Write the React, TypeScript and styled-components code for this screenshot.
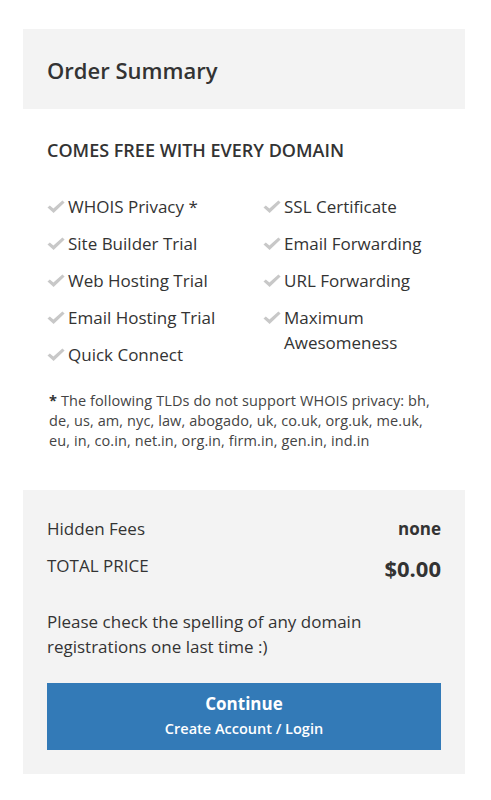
import React from "react";
import styled, { createGlobalStyle } from "styled-components";

const GlobalStyle = createGlobalStyle`
    body {
        margin: 0;
        background: #ffffff;
        font-family: "Open Sans", "Liberation Sans", sans-serif;
        color: #333333;
    }
`

const leftItems = ["WHOIS Privacy *", "Site Builder Trial", "Web Hosting Trial", "Email Hosting Trial", "Quick Connect"];
const rightItems = ["SSL Certificate", "Email Forwarding", "URL Forwarding", "Maximum Awesomeness"];

const Check = () => (
    <CheckIcon viewBox="0 0 18 14" width="18" height="14">
        <path d="M0.5 7.6 L2.8 5.4 L6.4 8.6 L15.4 0.6 L17.6 2.6 L6.6 13 Z" />
    </CheckIcon>
)

const Item = ({ text }: { text: string }) => (
    <Feature>
        <Check />
        <span>{text}</span>
    </Feature>
)

export default function App() {
    return (
        <>
            <GlobalStyle />
            <Panel>
                <Header>
                    <Title>Order Summary</Title>
                </Header>
                <Body>
                    <Heading>COMES FREE WITH EVERY DOMAIN</Heading>
                    <Features>
                        <Column>
                            {leftItems.map((t) => <Item key={t} text={t} />)}
                        </Column>
                        <Column>
                            {rightItems.map((t) => <Item key={t} text={t} />)}
                        </Column>
                    </Features>
                    <Note>
                        <b>*</b> The following TLDs do not support WHOIS privacy: bh, de, us, am, nyc, law, abogado, uk, co.uk, org.uk, me.uk, eu, in, co.in, net.in, org.in, firm.in, gen.in, ind.in
                    </Note>
                </Body>
                <Footer>
                    <Row>
                        <span>Hidden Fees</span>
                        <Value>none</Value>
                    </Row>
                    <Row>
                        <span>TOTAL PRICE</span>
                        <Value $big>$0.00</Value>
                    </Row>
                    <Message>Please check the spelling of any domain registrations one last time :)</Message>
                    <Button type="button">
                        <strong>Continue</strong>
                        <small>Create Account / Login</small>
                    </Button>
                </Footer>
            </Panel>
        </>
    )
}

const Panel = styled.div`
    width: 442px;
    margin: 29px 0 0 23px;
`

const Header = styled.div`
    background: #f3f3f3;
    height: 80px;
    padding: 0 24px;
    display: flex;
    align-items: center;
`

const Title = styled.h2`
    margin: 0;
    font-size: 22px;
    font-weight: 600;
    line-height: 30px;
    padding-top: 2px;
`

const Body = styled.div`
    padding: 29px 24px 39px;
`

const Heading = styled.h3`
    margin: 0 0 32px;
    font-size: 18px;
    font-weight: 600;
    line-height: 24px;
`

const Features = styled.div`
    display: grid;
    grid-template-columns: 216px 1fr;
`

const Column = styled.div`
    display: flex;
    flex-direction: column;
    gap: 12px;
`

const Feature = styled.div`
    display: flex;
    align-items: flex-start;
    gap: 3px;
    font-size: 17px;
    line-height: 25px;
`

const CheckIcon = styled.svg`
    flex: none;
    margin-top: 6px;
    fill: #c8c8c8;
`

const Note = styled.p`
    margin: 24px 0 0 2px;
    font-size: 14.5px;
    letter-spacing: 0.1px;
    line-height: 20px;
    color: #444444;

    b {
        font-weight: 700;
        color: #333333;
    }
`

const Footer = styled.div`
    background: #f3f3f3;
    padding: 26px 24px 24px;
`

const Row = styled.div`
    display: flex;
    justify-content: space-between;
    align-items: flex-start;
    font-size: 17px;
    line-height: 25px;
    margin-bottom: 12px;
`

const Value = styled.span<{ $big?: boolean }>`
    font-weight: 700;
    font-size: ${({ $big }) => ($big ? "22px" : "17px")};
    line-height: ${({ $big }) => ($big ? "30px" : "25px")};
`

const Message = styled.p`
    margin: 26px 0 24px;
    font-size: 17px;
    line-height: 25px;
`

const Button = styled.button`
    display: flex;
    flex-direction: column;
    align-items: center;
    width: 100%;
    height: 67px;
    padding: 9px 0 0;
    border: none;
    border-radius: 0;
    background: #337ab7;
    color: #ffffff;
    font-family: "Open Sans", "Liberation Sans", sans-serif;
    cursor: pointer;

    strong {
        font-size: 17px;
        font-weight: 700;
        line-height: 24px;
    }

    small {
        font-size: 14.5px;
        font-weight: 600;
        line-height: 26px;
    }
`
